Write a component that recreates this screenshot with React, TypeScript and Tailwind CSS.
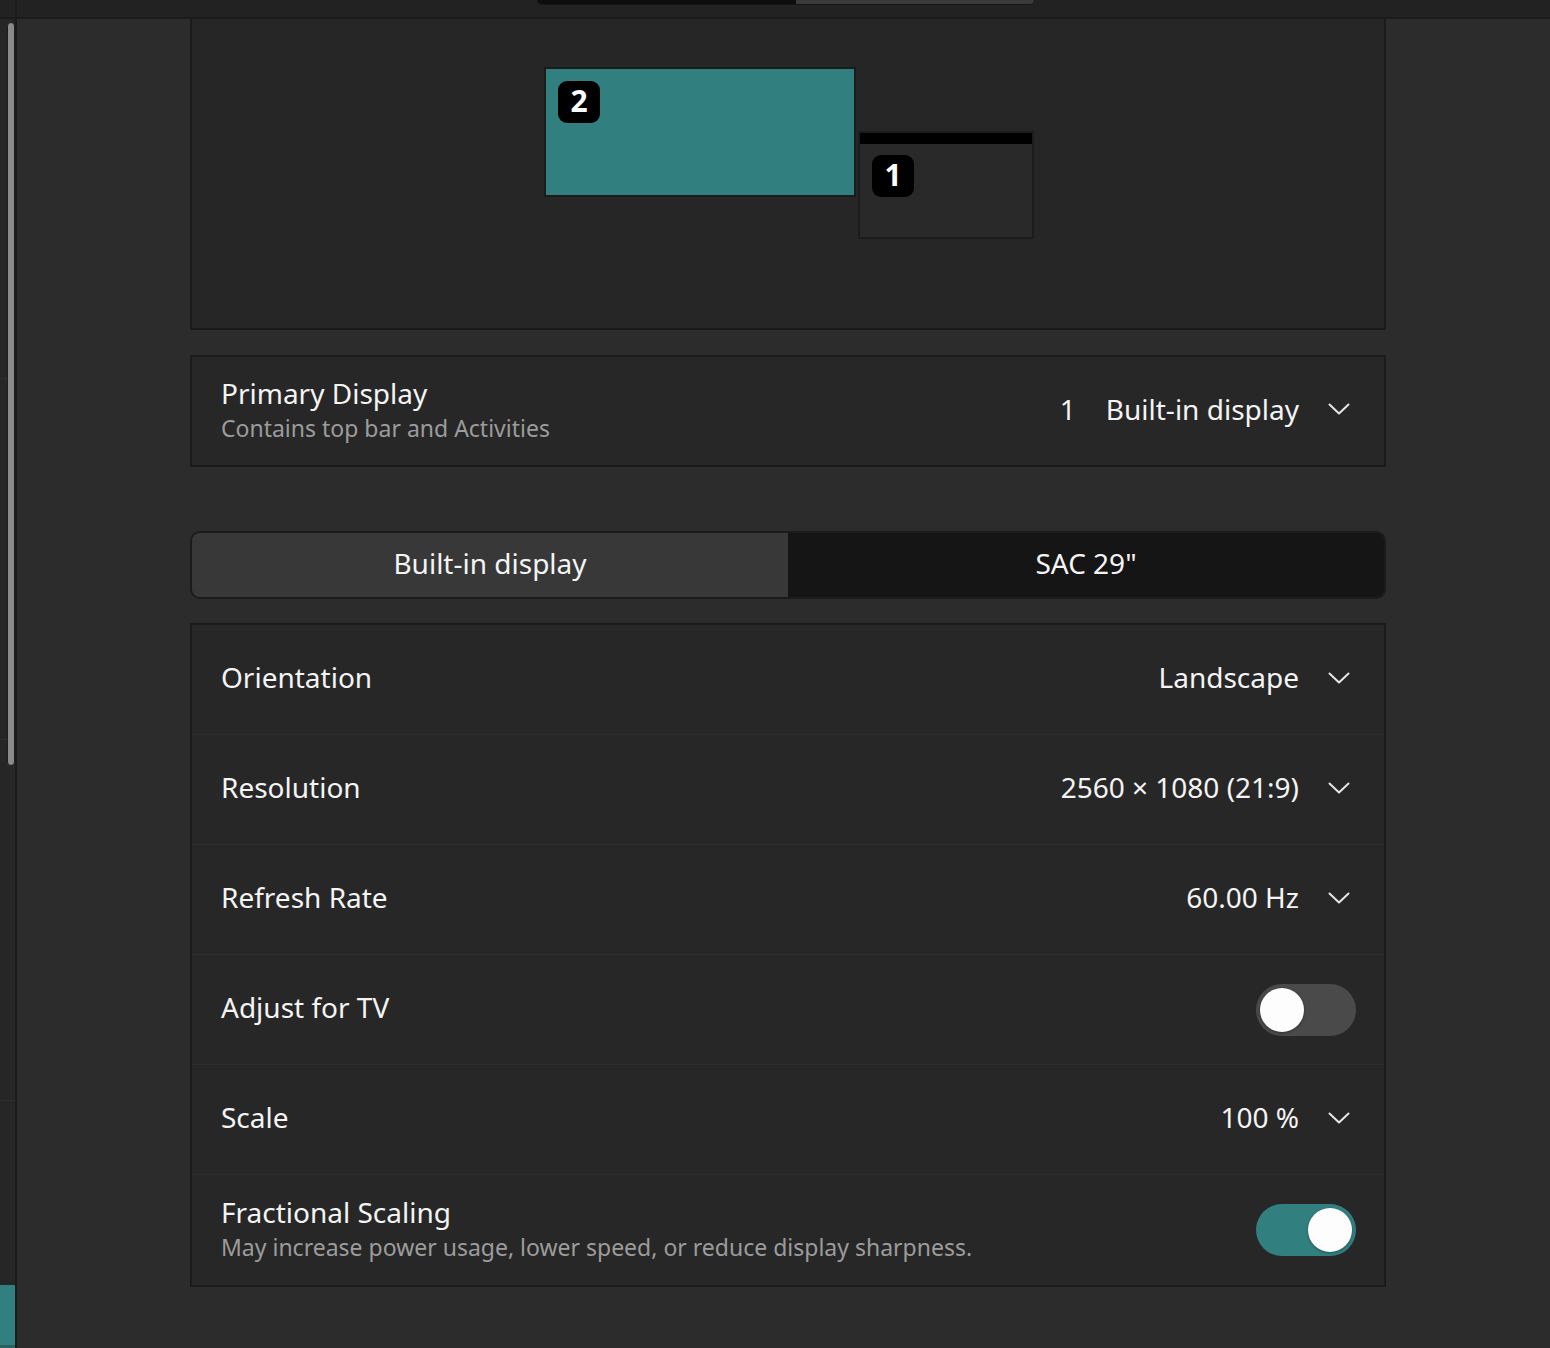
import { useState } from 'react';

const font = { fontFamily: '"Noto Sans", "Open Sans", sans-serif' };

function Chevron() {
  return (
    <svg width="22" height="12" viewBox="0 0 22 12" className="shrink-0">
      <path d="M1.5 1.5 L11 10.5 L20.5 1.5" fill="none" stroke="#e6e6e6" strokeWidth="2" strokeLinecap="round" strokeLinejoin="round" />
    </svg>
  );
}

function Toggle({ on }: { on: boolean }) {
  return (
    <div
      className={
        on
          ? 'w-[100px] h-[52px] rounded-full bg-[#31807f] p-[4px] flex justify-end'
          : 'w-[100px] h-[52px] rounded-full bg-[#4a4a4a] p-[4px] flex justify-start'
      }
    >
      <div className="w-[44px] h-[44px] rounded-full bg-[#fdfdfd] shadow-[0_1px_3px_rgba(0,0,0,0.35)]" />
    </div>
  );
}

function Badge({ n }: { n: string }) {
  return (
    <div className="w-[42px] h-[42px] rounded-[9px] bg-black flex items-center justify-center text-white text-[30px] font-bold leading-none pb-[2px]">
      {n}
    </div>
  );
}

interface RowProps {
  label: string;
  sub?: string;
  value?: string;
  toggle?: boolean;
  last?: boolean;
}

function Row({ label, sub, value, toggle, last }: RowProps) {
  return (
    <div
      className={
        'h-[110px] flex items-center pl-[29px] pr-[34px] ' +
        (last ? '' : 'border-b border-[#2e2e2e]')
      }
    >
      <div className={'flex-1 flex flex-col ' + (sub ? 'pb-[2px]' : 'pb-[5px]')}>
        <span className="text-[28px] leading-[32px] text-[#f4f4f4]">{label}</span>
        {sub && <span className="mt-[4px] text-[23px] leading-[31px] text-[#9c9c9c]">{sub}</span>}
      </div>
      {value !== undefined && (
        <div className="flex items-center gap-[29px] pb-[3px]">
          <span className="text-[28px] leading-[34px] text-[#f4f4f4] pb-[2px]">{value}</span>
          <Chevron />
        </div>
      )}
      {toggle !== undefined && (
        <div className="-mr-[6px]">
          <Toggle on={toggle} />
        </div>
      )}
    </div>
  );
}

export default function App() {
  const [tab] = useState(0);
  return (
    <div className="w-[1550px] h-[1348px] flex bg-[#2c2c2c] overflow-hidden" style={font}>
      {/* sidebar edge */}
      <div className="w-[17px] shrink-0 flex flex-col border-r-2 border-[#1b1b1b] relative">
        <div className="h-[17px] bg-[#222222] border-b-2 border-[#1b1b1b] box-content" />
        <div className="flex-1 bg-[#262626] flex flex-col">
          <div className="h-[360px] border-b border-[#2e2e2e]" />
          <div className="h-[361px] border-b border-[#2e2e2e]" />
          <div className="h-[361px] border-b border-[#2e2e2e]" />
          <div className="h-[184px]" />
          <div className="h-[60px] bg-[#31807f]" />
          <div className="flex-1 bg-[#2a6261]" />
        </div>
        <div className="absolute left-[7px] top-[22px] w-[8px] h-[744px] rounded-full bg-[#8a8a8a] border border-[#1e1e1e]" />
      </div>

      {/* main */}
      <div className="flex-1 flex flex-col">
        <div className="h-[17px] bg-[#222222] border-b-2 border-[#1b1b1b] box-content flex pl-[520px]">
          <div className="w-[498px] h-[5px] flex rounded-b-[10px] overflow-hidden border border-t-0 border-[#161616]">
            <div className="w-[258px] bg-[#0d0d0d]" />
            <div className="flex-1 bg-[#3a3a3a]" />
          </div>
        </div>

        <div className="pl-[173px] flex flex-col w-[1369px]">
          {/* arrangement */}
          <div className="h-[311px] bg-[#262626] border-2 border-t-0 border-[#1b1b1b] flex items-start pl-[352px]">
            <div className="mt-[48px] w-[312px] h-[130px] bg-[#31807f] border-2 border-[#1c1c1c] p-[12px]">
              <Badge n="2" />
            </div>
            <div className="mt-[112px] ml-[2px] w-[176px] h-[108px] bg-[#292929] border-2 border-[#1c1c1c] flex flex-col">
              <div className="h-[11px] bg-black" />
              <div className="pl-[12px] pt-[11px]">
                <Badge n="1" />
              </div>
            </div>
          </div>

          {/* primary display */}
          <div className="mt-[25px] h-[112px] bg-[#272727] border-2 border-[#1b1b1b] flex items-center pl-[29px] pr-[34px]">
            <div className="flex-1 flex flex-col pb-[2px]">
              <span className="text-[28px] leading-[32px] text-[#f4f4f4]">Primary Display</span>
              <span className="mt-[4px] text-[23px] leading-[31px] text-[#9c9c9c]">Contains top bar and Activities</span>
            </div>
            <div className="flex items-center pb-[4px]">
              <span className="text-[28px] text-[#f4f4f4] mr-[30px]">1</span>
              <span className="text-[28px] text-[#f4f4f4] mr-[29px]">Built-in display</span>
              <Chevron />
            </div>
          </div>

          {/* display tabs */}
          <div className="mt-[64px] h-[68px] flex rounded-[10px] overflow-hidden border-2 border-[#1b1b1b]">
            <div className={'flex-1 flex items-center justify-center pb-[4px] text-[28px] text-[#f4f4f4] ' + (tab === 0 ? 'bg-[#383838]' : 'bg-[#151515]')}>
              Built-in display
            </div>
            <div className={'flex-1 flex items-center justify-center pb-[4px] text-[28px] text-[#f4f4f4] ' + (tab === 1 ? 'bg-[#383838]' : 'bg-[#151515]')}>
              SAC 29"
            </div>
          </div>

          {/* settings */}
          <div className="mt-[24px] bg-[#272727] border-2 border-[#1b1b1b] flex flex-col">
            <Row label="Orientation" value="Landscape" />
            <Row label="Resolution" value="2560 × 1080 (21:9)" />
            <Row label="Refresh Rate" value="60.00 Hz" />
            <Row label="Adjust for TV" toggle={false} />
            <Row label="Scale" value="100 %" />
            <Row
              label="Fractional Scaling"
              sub="May increase power usage, lower speed, or reduce display sharpness."
              toggle={true}
              last
            />
          </div>
        </div>
      </div>
    </div>
  );
}
